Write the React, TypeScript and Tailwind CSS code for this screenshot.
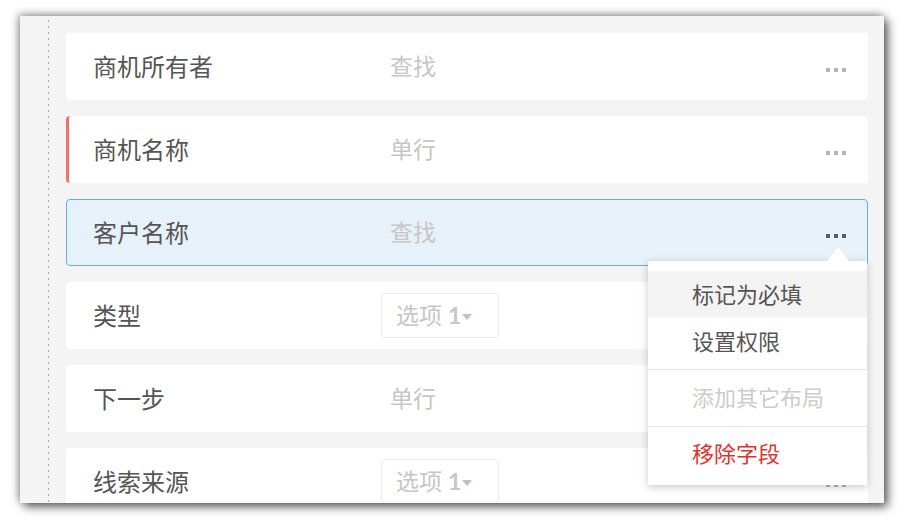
/**
 * Form layout editor: a column of field cards with an open "..." menu
 * on the selected field.
 */

// ---------------------------------------------------------------------------
// Types & data
// ---------------------------------------------------------------------------

interface Field {
  label: string;
  kind: "text" | "select";
  value?: string;
  required?: boolean;
  active?: boolean;
}

const FIELDS: Field[] = [
  { label: "商机所有者", kind: "text", value: "查找" },
  { label: "商机名称", kind: "text", value: "单行", required: true },
  { label: "客户名称", kind: "text", value: "查找", active: true },
  { label: "类型", kind: "select" },
  { label: "下一步", kind: "text", value: "单行" },
  { label: "线索来源", kind: "select" },
];

// ---------------------------------------------------------------------------
// Card styles (static class maps)
// ---------------------------------------------------------------------------

const CARD_BASE = "flex h-[67px] shrink-0 items-center rounded-[4px]";
const CARD_PLAIN = "bg-white pl-[27px] pr-[22px]";
const CARD_REQUIRED = "bg-white border-l-[3px] border-[#f0716b] pl-[24px] pr-[22px]";
const CARD_ACTIVE = "bg-[#e7f1fa] border border-[#62b0e3] pl-[26px] pr-[21px]";

function cardClass(f: Field) {
  if (f.active) return `${CARD_BASE} ${CARD_ACTIVE}`;
  if (f.required) return `${CARD_BASE} ${CARD_REQUIRED}`;
  return `${CARD_BASE} ${CARD_PLAIN}`;
}

// ---------------------------------------------------------------------------
// Pieces
// ---------------------------------------------------------------------------

function Dots({ dark }: { dark?: boolean }) {
  const dot = dark ? "h-[4px] w-[4px] bg-[#5c5c5c]" : "h-[4px] w-[4px] bg-[#b4b4b4]";
  return (
    <div className="ml-auto mt-[7px] flex gap-[4px]">
      <span className={dot} />
      <span className={dot} />
      <span className={dot} />
    </div>
  );
}

function SelectBox() {
  return (
    <div className="flex h-[45px] w-[118px] items-center rounded-[4px] border border-[#ebebeb] bg-white pl-[14px] text-[23px] text-[#c6c6c6]">
      <span>选项</span>
      <span className="ml-[6px] font-bold">1</span>
      <span className="ml-[1px] mt-[2px] h-0 w-0 border-x-[5px] border-t-[6px] border-x-transparent border-t-[#b5c4cd]" />
    </div>
  );
}

function FieldCard({ field }: { field: Field }) {
  return (
    <div className={cardClass(field)}>
      <span className="w-[288px] text-[24px] text-[#555555]">{field.label}</span>
      {field.kind === "select" ? (
        <SelectBox />
      ) : (
        <span className="pl-[9px] text-[23px] text-[#c6c6c6]">{field.value}</span>
      )}
      <Dots dark={field.active} />
    </div>
  );
}

function FieldMenu() {
  return (
    <div className="absolute left-[628px] top-[245px] w-[219px] bg-white pt-[10px] text-[22px] text-[#555555] shadow-[0_2px_8px_rgba(0,0,0,0.22)]">
      {/* pointer */}
      <span className="absolute -top-[14px] left-[179px] h-0 w-0 border-x-[11px] border-b-[14px] border-x-transparent border-b-white" />
      <div className="flex h-[46px] items-center bg-[#f3f3f3] pl-[44px]">标记为必填</div>
      <div className="flex h-[52px] items-center pb-[4px] pl-[44px]">设置权限</div>
      <div className="h-px bg-[#e6e6e6]" />
      <div className="flex h-[56px] items-center pb-[2px] pl-[44px] text-[#cccccc]">添加其它布局</div>
      <div className="h-px bg-[#e6e6e6]" />
      <div className="flex h-[58px] items-center pb-[6px] pl-[44px] text-[#e2312b]">移除字段</div>
    </div>
  );
}

// ---------------------------------------------------------------------------
// Page
// ---------------------------------------------------------------------------

export default function App() {
  return (
    <div className="h-[521px] w-[905px] bg-white pl-[20px] pt-[16px] font-[Lato,'Noto_Sans_CJK_SC',sans-serif]">
      <div className="relative flex h-[487px] w-[864px] overflow-hidden bg-[#f4f4f4] shadow-[4px_4px_9px_rgba(0,0,0,0.6),-2px_-2px_8px_rgba(0,0,0,0.35)]">
        {/* dotted guide line */}
        <div className="ml-[28px] mt-[4px] w-px shrink-0 bg-[linear-gradient(to_bottom,#a8a8a8_40%,transparent_40%)] bg-[length:1px_6px]" />

        {/* field list */}
        <div className="ml-[17px] mt-[17px] flex w-[802px] flex-col gap-[16px]">
          {FIELDS.map((f) => (
            <FieldCard key={f.label} field={f} />
          ))}
        </div>

        <FieldMenu />
      </div>
    </div>
  );
}
